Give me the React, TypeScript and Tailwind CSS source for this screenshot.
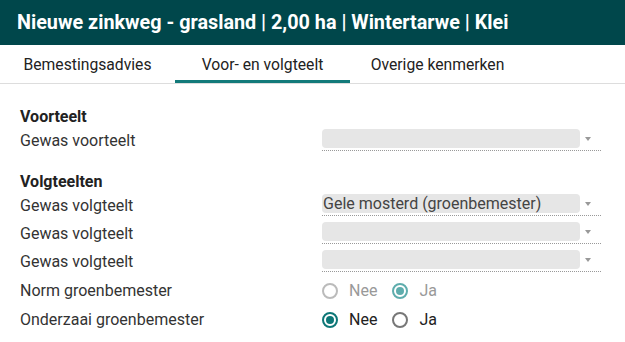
import type { ReactNode } from 'react'

const tabs = ['Bemestingsadvies', 'Voor- en volgteelt', 'Overige kenmerken']

export default function App() {
  return (
    <div className="h-[342px] w-[625px] overflow-hidden bg-white font-['Roboto',sans-serif] text-[16px] text-[#333]">
      <div className="flex h-[45px] items-center bg-[#00474b] px-[17px] text-[19.8px] font-bold text-white">
        Nieuwe zinkweg - grasland | 2,00 ha | Wintertarwe | Klei
      </div>
      <div className="flex h-[39px] border-b border-[#dddddd]">
        {tabs.map((t, i) => (
          <div
            key={t}
            className={
              'flex w-[175px] items-center justify-center pt-[2px] text-[15.7px] text-[#222] ' +
              (i === 1 ? 'border-b-[3px] border-[#127a7a] pt-[5px]' : '')
            }
          >
            {t}
          </div>
        ))}
      </div>
      <div className="px-[20px] pt-[23px]">
        <Heading>Voorteelt</Heading>
        <Row label="Gewas voorteelt">
          <Select />
        </Row>
        <div className="mt-[17px]">
          <Heading>Volgteelten</Heading>
        </div>
        <Row label="Gewas volgteelt">
          <Select value="Gele mosterd (groenbemester)" />
        </Row>
        <Row label="Gewas volgteelt">
          <Select />
        </Row>
        <Row label="Gewas volgteelt">
          <Select />
        </Row>
        <Row label="Norm groenbemester" tall>
          <Radio label="Nee" disabled />
          <Radio label="Ja" checked disabled />
        </Row>
        <Row label="Onderzaai groenbemester" tall>
          <Radio label="Nee" checked />
          <Radio label="Ja" />
        </Row>
      </div>
    </div>
  )
}

function Heading(props: { children: ReactNode }) {
  return <div className="flex h-[20px] items-center font-bold text-[#222]">{props.children}</div>
}

interface Row {
  label: string
  tall?: boolean
  children?: ReactNode
}
function Row(props: Row) {
  return (
    <div className={'flex ' + (props.tall ? 'h-[29px] items-center' : 'h-[28px]')}>
      <div className={'flex w-[302px] ' + (props.tall ? '' : 'items-center')}>{props.label}</div>
      <div className={'flex ' + (props.tall ? 'items-center gap-[15px]' : '')}>{props.children}</div>
    </div>
  )
}

function Select(props: { value?: string }) {
  return (
    <div className="flex w-[279px] flex-col pt-[2px]">
      <div className="flex items-center">
        <div className="flex h-[19px] w-[258px] items-center overflow-hidden rounded-[4px] bg-[#e6e6e6] pl-[1px] text-[#444]">
          {props.value}
        </div>
        <div className="ml-[5px] h-0 w-0 border-x-[3.5px] border-t-[4px] border-x-transparent border-t-[#999]" />
      </div>
      <div className="mt-[2px] border-b border-dotted border-[#999]" />
    </div>
  )
}

interface Radio {
  label: string
  checked?: boolean
  disabled?: boolean
}
function Radio(props: Radio) {
  const ring = props.disabled
    ? props.checked
      ? 'border-[#5eadad]'
      : 'border-[#bbbbbb]'
    : props.checked
      ? 'border-[#0d7777]'
      : 'border-[#777777]'
  const dot = props.disabled ? 'bg-[#5eadad]' : 'bg-[#0d7777]'
  return (
    <div className="flex items-center gap-[11px]">
      <div className={'flex h-[16px] w-[16px] items-center justify-center rounded-full border-2 ' + ring}>
        {props.checked && <div className={'h-[8px] w-[8px] rounded-full ' + dot} />}
      </div>
      <span className={props.disabled ? 'text-[#999]' : 'text-[#222]'}>{props.label}</span>
    </div>
  )
}
